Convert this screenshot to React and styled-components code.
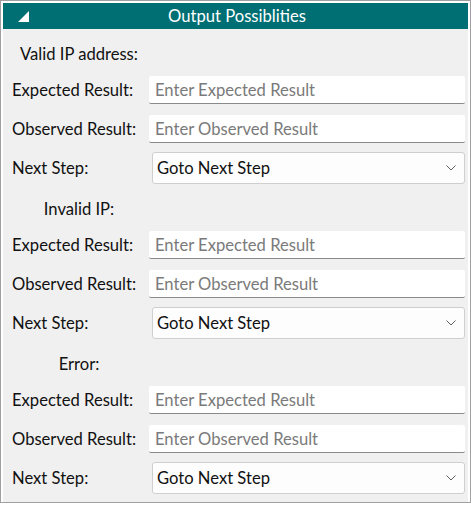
import React from "react";
import styled, { createGlobalStyle } from "styled-components";

const GlobalStyle = createGlobalStyle`
  html, body {
    margin: 0;
    padding: 0;
    background: #ffffff;
  }
  * {
    box-sizing: border-box;
  }
`;

const Frame = styled.div`
  width: 471px;
  height: 503px;
  border: 1px solid #a0a0a0;
  padding: 2px 2px 0 2px;
  background: #ffffff;
  font-family: "Lato", "Noto Sans", sans-serif;
`;

const Panel = styled.div`
  height: 100%;
  background: #f0f0f0;
  display: flex;
  flex-direction: column;
`;

const Header = styled.div`
  height: 26px;
  background: #006f74;
  color: #ffffff;
  display: flex;
  align-items: center;
  position: relative;
  font-size: 16.6px;
`;

const Toggle = styled.svg`
  position: absolute;
  left: 15px;
  top: 8px;
`;

const HeaderTitle = styled.div`
  flex: 1;
  text-align: center;
  padding-left: 3px;
`;

const Content = styled.div`
  display: flex;
  flex-direction: column;
  gap: 7px;
  padding: 7px 3px 0 0;
`;

const SectionLabel = styled.div`
  width: 152px;
  height: 31px;
  padding-top: 9px;
  line-height: 18px;
  text-align: center;
  font-size: 16.6px;
  color: #111;
`;

const Row = styled.div`
  height: 32px;
  display: flex;
  align-items: center;
  padding-left: 9px;
`;

const Label = styled.div`
  width: 137px;
  font-size: 16.6px;
  color: #111;
  white-space: nowrap;
`;

const TextInput = styled.input`
  flex: 1;
  height: 28px;
  border: none;
  border-bottom: 1px solid #8a8a8a;
  border-radius: 2px;
  background: #ffffff;
  padding: 0 6px;
  font-family: inherit;
  font-size: 16.6px;
  outline: none;
  &::placeholder {
    color: #7a7a7a;
  }
`;

const SelectBox = styled.div`
  flex: 1;
  margin-left: 3px;
  height: 32px;
  border: 1px solid #cfcfcf;
  border-radius: 3px;
  background: #fdfdfd;
  display: flex;
  align-items: center;
  justify-content: space-between;
  padding: 0 8px 0 4px;
  font-size: 16.6px;
  color: #111;
`;

const Chevron = () => (
  <svg width="10" height="6" viewBox="0 0 10 6">
    <path d="M0.5 0.5 L5 5 L9.5 0.5" fill="none" stroke="#606060" strokeWidth="1" />
  </svg>
);

const sections = ["Valid IP address:", "Invalid IP:", "Error:"];

const Section = ({ title }) => (
  <>
    <SectionLabel>{title}</SectionLabel>
    <Row>
      <Label>Expected Result:</Label>
      <TextInput placeholder="Enter Expected Result" />
    </Row>
    <Row>
      <Label>Observed Result:</Label>
      <TextInput placeholder="Enter Observed Result" />
    </Row>
    <Row>
      <Label>Next Step:</Label>
      <SelectBox>
        <span>Goto Next Step</span>
        <Chevron />
      </SelectBox>
    </Row>
  </>
);

export default function App() {
  return (
    <>
      <GlobalStyle />
      <Frame>
        <Panel>
          <Header>
            <Toggle width="11" height="12" viewBox="0 0 11 12">
              <polygon points="11,0 11,11 0,11" fill="#ffffff" />
            </Toggle>
            <HeaderTitle>Output Possiblities</HeaderTitle>
          </Header>
          <Content>
            {sections.map((s) => (
              <Section key={s} title={s} />
            ))}
          </Content>
        </Panel>
      </Frame>
    </>
  );
}
